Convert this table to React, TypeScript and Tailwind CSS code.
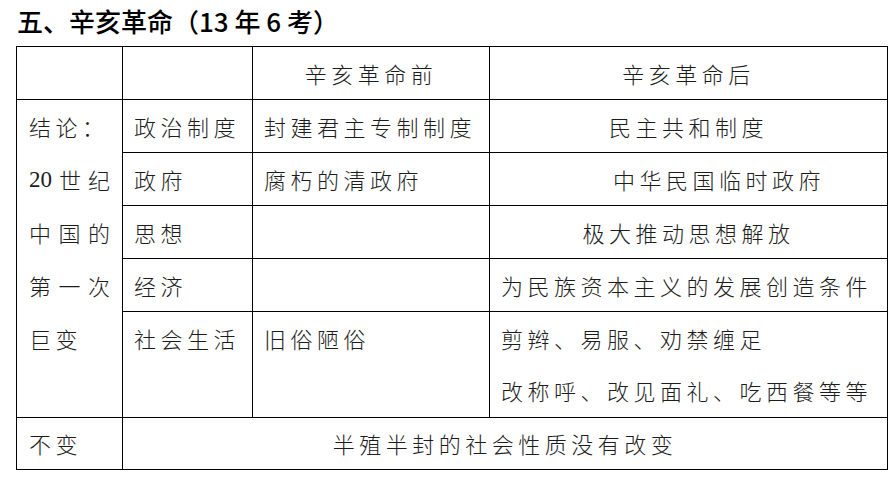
import React from 'react'

const cjk = "font-['Noto_Sans_CJK_SC','Noto_Sans',sans-serif]"

const conclusion = [
  { text: '结论：', spread: false },
  { text: '20 世纪', spread: true },
  { text: '中国的', spread: true },
  { text: '第一次', spread: true },
  { text: '巨变', spread: false }
]

const rows = [
  { aspect: '政治制度', before: '封建君主专制制度', after: ['民主共和制度'], align: 'center' },
  { aspect: '政府', before: '腐朽的清政府', after: ['中华民国临时政府'], align: 'offset' },
  { aspect: '思想', before: '', after: ['极大推动思想解放'], align: 'center' },
  { aspect: '经济', before: '', after: ['为民族资本主义的发展创造条件'], align: 'left' },
  {
    aspect: '社会生活',
    before: '旧俗陋俗',
    after: ['剪辫、易服、劝禁缠足', '改称呼、改见面礼、吃西餐等等'],
    align: 'left'
  }
]

const cell = 'border-[1.5px] border-black p-0 align-top'

const ConclusionLine = ({ text, spread }: { text: string; spread: boolean }) => {
  if (!spread) return <div className="h-[53px] leading-[53px]">{text}</div>
  // 20 世纪 / 中国的 / 第一次 are stretched across the cell
  const parts = text.startsWith('20') ? ['20', '世', '纪'] : text.split('')
  return (
    <div className="flex h-[53px] justify-between leading-[53px] tracking-normal">
      {parts.map((p, i) => (
        <span key={i} className={p === '20' ? "font-['Liberation_Serif',serif] text-[23px]" : ''}>
          {p}
        </span>
      ))}
    </div>
  )
}

const App = () => {
  return (
    <div className={`min-h-screen w-[894px] bg-white pl-[16px] text-[#1c1c1c] ${cjk}`}>
      <h1 className="h-[46px] pl-[1px] text-[26px] leading-[42px] font-medium text-black">
        五、辛亥革命（13 年 6 考）
      </h1>

      <table className="w-[871px] table-fixed border-collapse text-[22px] font-light tracking-[4.5px]">
        <colgroup>
          <col className="w-[106px]" />
          <col className="w-[130px]" />
          <col className="w-[237px]" />
          <col className="w-[398px]" />
        </colgroup>
        <tbody>
          <tr className="h-[53px]">
            <td className={cell}></td>
            <td className={cell}></td>
            <td className={`${cell} text-center leading-[52px]`}>辛亥革命前</td>
            <td className={`${cell} text-center leading-[52px]`}>辛亥革命后</td>
          </tr>

          {rows.map((row, i) => (
            <tr key={row.aspect} className={i === 4 ? 'h-[106px]' : 'h-[53px]'}>
              {i === 0 && (
                <td rowSpan={5} className={`${cell} px-[12px]`}>
                  {conclusion.map((line) => (
                    <ConclusionLine key={line.text} {...line} />
                  ))}
                </td>
              )}
              <td className={`${cell} px-[11px] leading-[52px]`}>{row.aspect}</td>
              <td className={`${cell} px-[11px] leading-[52px]`}>{row.before}</td>
              <td
                className={`${cell} leading-[52px] ${
                  row.align === 'center'
                    ? 'text-center'
                    : row.align === 'offset'
                      ? 'pl-[123px]'
                      : 'px-[11px]'
                }`}
              >
                {row.after.map((t) => (
                  <div key={t} className="whitespace-nowrap">
                    {t}
                  </div>
                ))}
              </td>
            </tr>
          ))}

          <tr className="h-[52px]">
            <td className={`${cell} px-[12px] leading-[51px]`}>不变</td>
            <td colSpan={3} className={`${cell} text-center leading-[51px]`}>
              半殖半封的社会性质没有改变
            </td>
          </tr>
        </tbody>
      </table>
    </div>
  )
}

export default App
